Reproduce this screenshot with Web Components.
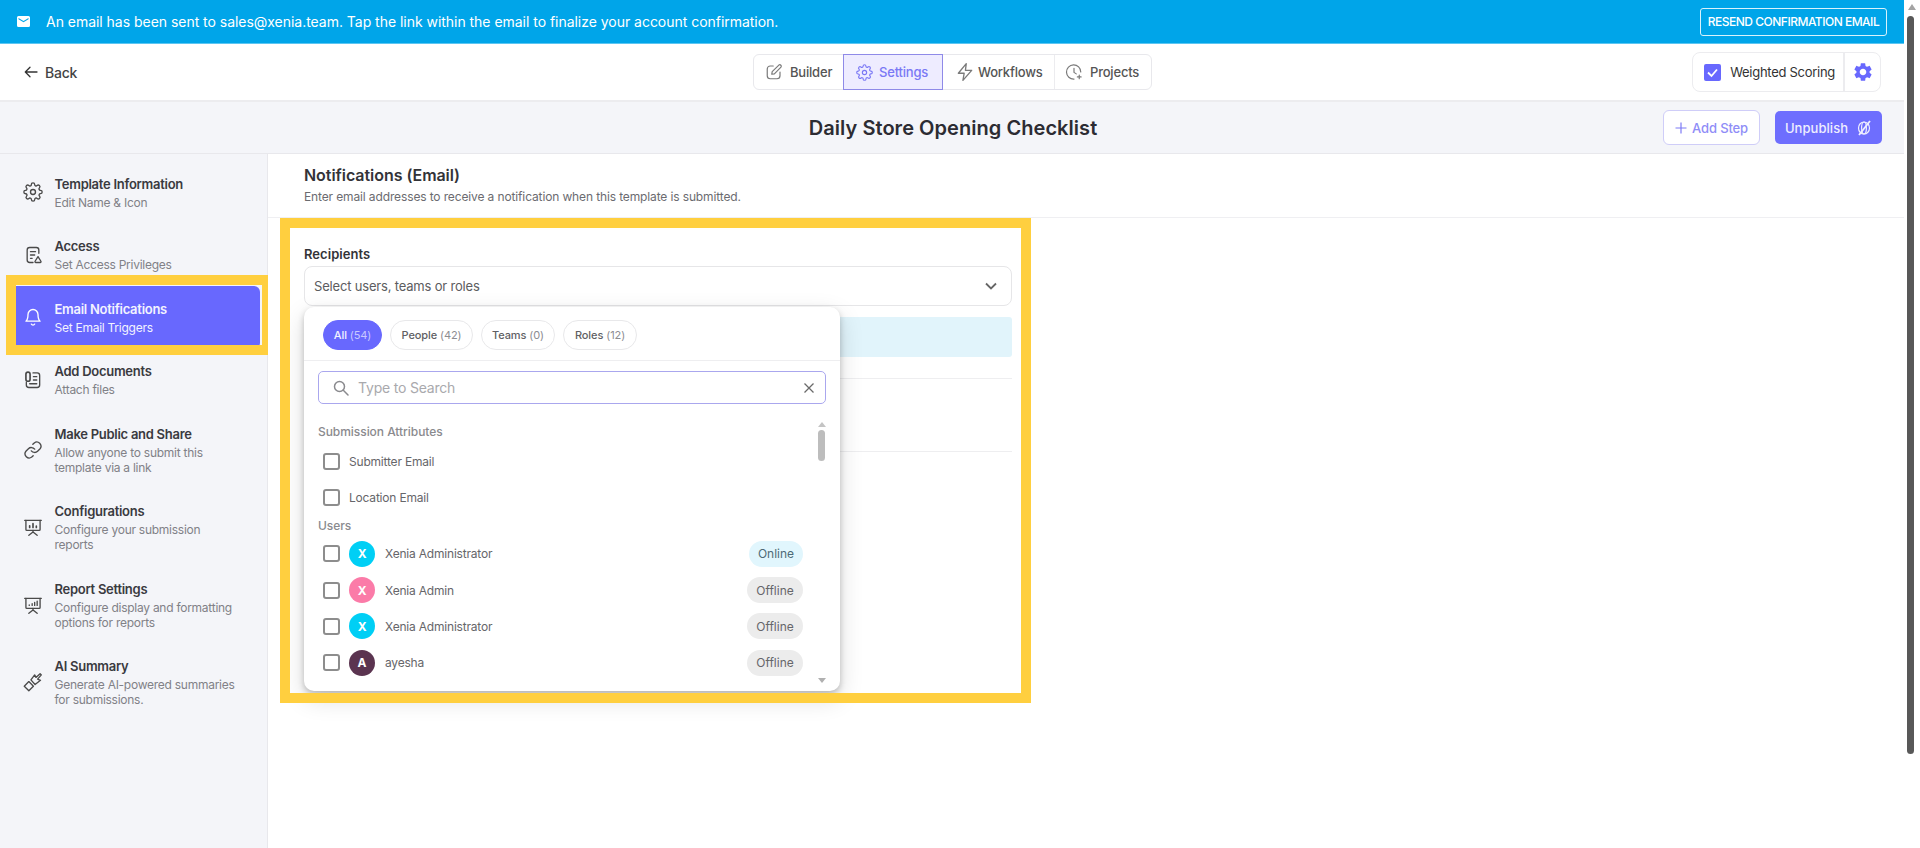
<!DOCTYPE html>
<html>
<head>
<meta charset="utf-8">
<title>Daily Store Opening Checklist</title>
<style>
  html, body { margin: 0; height: 100%; overflow: hidden; background: #fff; }
  body { font-family: "Inter", "Noto Sans", sans-serif; color: #333; }
</style>
</head>
<body>
<app-shell>
  <confirm-banner email="sales@xenia.team"></confirm-banner>
  <top-bar></top-bar>
  <title-bar>Daily Store Opening Checklist</title-bar>
  <div slot="body">
    <side-nav></side-nav>
  </div>
</app-shell>

<script>
const ICONS = {
  gear: '<circle cx="12" cy="12" r="3"/><path d="M19.4 15a1.65 1.65 0 0 0 .33 1.82l.06.06a2 2 0 0 1-2.83 2.83l-.06-.06a1.65 1.65 0 0 0-1.82-.33 1.65 1.65 0 0 0-1 1.51V21a2 2 0 0 1-4 0v-.09A1.65 1.65 0 0 0 9 19.4a1.65 1.65 0 0 0-1.82.33l-.06.06a2 2 0 0 1-2.83-2.83l.06-.06a1.65 1.65 0 0 0 .33-1.82 1.65 1.65 0 0 0-1.51-1H3a2 2 0 0 1 0-4h.09A1.65 1.65 0 0 0 4.6 9a1.65 1.65 0 0 0-.33-1.82l-.06-.06a2 2 0 0 1 2.83-2.83l.06.06a1.65 1.65 0 0 0 1.82.33H9a1.65 1.65 0 0 0 1-1.51V3a2 2 0 0 1 4 0v.09a1.65 1.65 0 0 0 1 1.51 1.65 1.65 0 0 0 1.82-.33l.06-.06a2 2 0 0 1 2.83 2.83l-.06.06a1.65 1.65 0 0 0-.33 1.82V9a1.65 1.65 0 0 0 1.51 1H21a2 2 0 0 1 0 4h-.09a1.65 1.65 0 0 0-1.51 1z"/>',
  edit: '<path d="M11 4H7a4 4 0 0 0-4 4v9a4 4 0 0 0 4 4h9a4 4 0 0 0 4-4v-5"/><path d="M18.5 2.8a2 2 0 0 1 2.8 2.8L12.5 14.4 9 15l.6-3.5z"/>',
  bolt: '<path d="M13.5 2 4 13.5h7L9.5 22 20 10h-7.5z"/>',
  clock: '<path d="M21 12a9.5 9.5 0 1 0-9 9.5"/><path d="M12 7v5.5l3 2"/><path d="M19 16v5M16.5 18.500h5"/>',
  doclock: '<path d="M19 10V6a3 3 0 0 0-3-3H8a3 3 0 0 0-3 3v12a3 3 0 0 0 3 3h4"/><path d="M9 8h6M9 12h5M9 16h2"/><path d="M18 14l3.500 5.500a1 1 0 0 1-.9 1.500h-5.200a1 1 0 0 1-.9-1.500z"/>',
  bell: '<path d="M18 9a6 6 0 0 0-12 0c0 6-2.500 8-2.500 8h17S18 15 18 9"/><path d="M10 20.500a2.200 2.200 0 0 0 4 0"/>',
  docs: '<path d="M12 3.500h5a3 3 0 0 1 3 3V18a3 3 0 0 1-3 3H7a3 3 0 0 1-3-3v-3"/><path d="M3.500 5v6a2.500 2.500 0 0 0 5 0V5a2.500 2.500 0 0 0-5 0" stroke-width="2"/><path d="M12.500 8h4M12.500 12h4M8 16.500h8.500"/>',
  link: '<path d="M10 13a5 5 0 0 0 7.500.5l3-3a5 5 0 0 0-7-7l-1.700 1.700"/><path d="M14 11a5 5 0 0 0-7.500-.5l-3 3a5 5 0 0 0 7 7l1.700-1.700"/>',
  board: '<path d="M2 4h20"/><path d="M3.500 4v11a1 1 0 0 0 1 1h15a1 1 0 0 0 1-1V4"/><path d="M12 16v2M12 18l-5 4M12 18l5 4"/><path d="M8 12.500v-2M12 12.500V8M16 12.500v-1.500" stroke-width="2"/>',
  boardline: '<path d="M2 4h20"/><path d="M3.500 4v11a1 1 0 0 0 1 1h15a1 1 0 0 0 1-1V4"/><path d="M12 16v2M12 18l-5 4M12 18l5 4"/><path d="M7.500 12.500v-.5M11 12.500V10.500M14 12.500V9M17 12.500V7.500"/>',
  spark: '<path d="M7 11.500 12.500 17 7 22.500 1.500 17z"/><path d="M9.500 9.500 14 3.500l1.500 3L20.500 2 22 3.500l-4.500 5 3.500 1.500L14.500 15z"/>'
};

function svgIcon(name, size, stroke) {
  return `<svg width="${size}" height="${size}" viewBox="0 0 24 24" fill="none" stroke="currentColor" stroke-width="${stroke || 1.6}" stroke-linecap="round" stroke-linejoin="round">${ICONS[name]}</svg>`;
}

class AppShell extends HTMLElement {
  constructor() {
    super();
    this.attachShadow({mode: 'open'}).innerHTML = `
      <style>
        :host { display: flex; width: 1920px; height: 848px; overflow: hidden; }
        .page { flex: 1; min-width: 0; display: flex; flex-direction: column; }
        .body { flex: 1; display: flex; min-height: 0; }
      </style>
      <div class="page">
        <slot></slot>
        <div class="body"><slot name="body"></slot><notify-panel></notify-panel></div>
      </div>
      <page-scrollbar></page-scrollbar>
    `;
  }
}
customElements.define('app-shell', AppShell);

class PageScrollbar extends HTMLElement {
  constructor() {
    super();
    this.attachShadow({mode: 'open'}).innerHTML = `
      <style>
        :host { display: block; width: 16px; background: #fff; }
        .up { width: 0; height: 0; margin: 4px auto 0; border: 4px solid transparent; border-top: 0; border-bottom: 6px solid #a3a3a3; }
        .thumb { width: 7px; height: 738px; margin: 6px 0 0 3px; background: #585858; border-radius: 4px; }
      </style>
      <div class="up"></div>
      <div class="thumb"></div>
    `;
  }
}
customElements.define('page-scrollbar', PageScrollbar);

class ConfirmBanner extends HTMLElement {
  constructor() {
    super();
    this.attachShadow({mode: 'open'}).innerHTML = `
      <style>
        :host { display: flex; align-items: center; height: 43px; padding: 0 17px; background: #00a5e9; border-bottom: 1px solid #5cc6f2; color: #fff; font-size: 14px; letter-spacing: -.03px; }
        svg { flex: none; margin-right: 16px; }
        span { flex: 1; }
        button { height: 28px; width: 187px; padding: 0; background: none; border: 1px solid #d9f2fc; border-radius: 3px; color: #fff; font: 500 12px "Inter", sans-serif; letter-spacing: -.5px; }
      </style>
      <svg width="13" height="11" viewBox="0 0 13 11"><path fill="#fff" d="M1.500 0h10A1.500 1.500 0 0 1 13 1.500v8a1.500 1.500 0 0 1-1.500 1.500h-10A1.500 1.500 0 0 1 0 9.500v-8A1.500 1.500 0 0 1 1.500 0zm0 2v1.300l5 3 5-3V2l-5 3z" fill-rule="evenodd"/></svg>
      <span></span>
      <button>RESEND CONFIRMATION EMAIL</button>
    `;
    this.shadowRoot.querySelector('span').textContent =
      `An email has been sent to ${this.getAttribute('email')}. Tap the link within the email to finalize your account confirmation.`;
  }
}
customElements.define('confirm-banner', ConfirmBanner);

class TopBar extends HTMLElement {
  constructor() {
    super();
    this.attachShadow({mode: 'open'}).innerHTML = `
      <style>
        :host { display: grid; grid-template-columns: 1fr auto 1fr; align-items: center; height: 56px; padding: 0 23px 0 24px; background: #fff; border-bottom: 2px solid #ececef; }
        .back { display: flex; align-items: center; gap: 7px; font-size: 14px; font-weight: 500; color: #444; letter-spacing: -.2px; }
        .tabs { display: flex; height: 36px; box-sizing: border-box; border: 1px solid #e8e8ec; border-radius: 6px; }
        .tab { display: flex; align-items: center; box-sizing: border-box; font-size: 13px; font-weight: 500; color: #555; letter-spacing: -.2px; }
        .tab svg { color: #7a7a7a; flex: none; }
        .tab.on { margin: -1px 0; background: #eeecff; border: 1px solid #8f8ae8; color: #7a78f5; }
        .tab.on svg { color: #7a78f5; }
        .tab.rule { border-left: 1px solid #ececef; }
        .weight { justify-self: end; display: flex; height: 40px; box-sizing: border-box; border: 1px solid #ececef; border-radius: 8px; align-items: center; }
        .check { display: flex; align-items: center; gap: 9px; height: 100%; padding: 0 8px 0 11px; border-right: 2px solid #ececef; font-size: 13px; color: #333; letter-spacing: -.28px; }
        .box { width: 17px; height: 17px; background: #6868fe; border-radius: 2px; display: flex; }
        .cog { width: 35px; display: flex; justify-content: center; color: #6868fe; }
      </style>
      <div class="back">
        <svg width="14" height="14" viewBox="0 0 14 14" fill="none" stroke="#333" stroke-width="1.300" stroke-linecap="round" stroke-linejoin="round"><path d="M13 7H1.500M6 2.200 1.300 7 6 11.800"/></svg>
        Back
      </div>
      <div class="tabs">
        <div class="tab" style="width:89px;padding-left:11px;gap:7px">${svgIcon('edit', 18)}Builder</div>
        <div class="tab on" style="width:100px;padding-left:12px;gap:6px">${svgIcon('gear', 17)}Settings</div>
        <div class="tab" style="width:111px;padding-left:12px;gap:3px">${svgIcon('bolt', 20)}Workflows</div>
        <div class="tab rule" style="width:97px;padding-left:10px;gap:7px">${svgIcon('clock', 18)}Projects</div>
      </div>
      <div class="weight">
        <div class="check">
          <span class="box"><svg width="17" height="17" viewBox="0 0 17 17" fill="none" stroke="#fff" stroke-width="1.800"><path d="M4 8.500 7.500 12 13 5.500"/></svg></span>
          Weighted Scoring
        </div>
        <div class="cog"><svg width="22" height="22" viewBox="0 0 24 24" fill="currentColor"><path d="M19.14 12.94c.04-.3.06-.61.06-.94 0-.32-.02-.64-.07-.94l2.03-1.58c.18-.14.23-.41.12-.61l-1.920-3.320c-.12-.22-.37-.29-.59-.22l-2.390.96c-.5-.38-1.030-.7-1.620-.94l-.36-2.540c-.04-.24-.24-.41-.48-.41h-3.840c-.24 0-.43.17-.47.41l-.36 2.540c-.59.24-1.130.57-1.620.94l-2.390-.96c-.22-.08-.47 0-.59.22L2.740 8.870c-.12.21-.08.47.12.61l2.030 1.580c-.05.3-.09.63-.09.94s.02.64.07.94l-2.030 1.580c-.18.14-.23.41-.12.61l1.920 3.320c.12.22.37.29.59.22l2.390-.96c.5.38 1.030.7 1.620.94l.36 2.540c.05.24.24.41.48.41h3.840c.24 0 .44-.17.47-.41l.36-2.540c.59-.24 1.130-.56 1.620-.94l2.390.96c.22.08.47 0 .59-.22l1.920-3.320c.12-.22.07-.47-.12-.61l-2.010-1.580zM12 15.600c-1.980 0-3.600-1.620-3.600-3.600s1.620-3.600 3.600-3.600 3.600 1.620 3.600 3.600-1.620 3.600-3.600 3.600z"/></svg></div>
      </div>
    `;
  }
}
customElements.define('top-bar', TopBar);

class TitleBar extends HTMLElement {
  constructor() {
    super();
    this.attachShadow({mode: 'open'}).innerHTML = `
      <style>
        :host { display: grid; grid-template-columns: 1fr auto 1fr; align-items: center; height: 51px; padding: 0 22px 0 24px; background: #f4f5f9; border-bottom: 1px solid #e8e8ec; }
        h1 { margin: 0; font-size: 20px; font-weight: 600; color: #2c2c33; letter-spacing: .05px; grid-column: 2; }
        .acts { display: flex; gap: 15px; justify-self: end; align-items: center; }
        .add { display: flex; align-items: center; justify-content: center; gap: 5px; width: 97px; height: 35px; box-sizing: border-box; background: #fff; border: 1px solid #cfcdf8; border-radius: 6px; color: #8f8df7; font-size: 13px; font-weight: 500; letter-spacing: -.15px; }
        .pub { display: flex; align-items: center; justify-content: center; gap: 8px; width: 107px; height: 33px; background: #6e6efe; border-radius: 5px; color: #eeeeff; font-size: 13px; font-weight: 500; letter-spacing: .05px; }
      </style>
      <h1><slot></slot></h1>
      <div class="acts">
        <div class="add"><svg width="12" height="12" viewBox="0 0 12 12" stroke="#7d7bf5" stroke-width="1.200"><path d="M6 .5v11M.5 6h11"/></svg>Add Step</div>
        <div class="pub">Unpublish
          <svg width="16" height="16" viewBox="0 0 16 16" fill="none" stroke="#eeeeff" stroke-width="1.200"><ellipse cx="8" cy="8" rx="5.500" ry="6"/><ellipse cx="8" cy="8" rx="2.400" ry="6"/><path d="M14 1 3 15" stroke-width="1.800"/></svg>
        </div>
      </div>
    `;
  }
}
customElements.define('title-bar', TitleBar);

class NavItem extends HTMLElement {
  constructor() {
    super();
    const size = this.getAttribute('size') || 20;
    this.attachShadow({mode: 'open'}).innerHTML = `
      <style>
        :host { display: grid; grid-template-columns: 20px 1fr; column-gap: 11.500px; align-items: center; margin-left: 8px; margin-right: 7px; padding: 13.750px 15px; border-radius: 0 6px 6px 0; }
        :host([active]) { background: #6868fe; color: #fff; }
        .icon { display: flex; justify-content: center; color: #4a4a4a; }
        :host([active]) .icon { color: #fff; }
        .t { font-size: 13px; font-weight: 600; line-height: 18px; color: #3a3a40; letter-spacing: -.27px; }
        .s { font-size: 12px; line-height: 15px; margin-top: 2px; color: #818187; letter-spacing: -.26px; }
        :host([active]) .t, :host([active]) .s { color: #f3f3ff; }
      </style>
      <div class="icon">${svgIcon(this.getAttribute('icon'), size, 1.6)}</div>
      <div>
        <div class="t">${this.getAttribute('label')}</div>
        <div class="s"><slot></slot></div>
      </div>
    `;
  }
}
customElements.define('nav-item', NavItem);

class SideNav extends HTMLElement {
  constructor() {
    super();
    this.attachShadow({mode: 'open'}).innerHTML = `
      <style>
        :host { display: block; width: 268px; height: 100%; box-sizing: border-box; padding-top: 7px; background: #f4f5f9; border-right: 1px solid #e8e8ec; position: relative; }
        .mark { position: absolute; left: 6px; top: 121px; width: 246px; height: 60px; border: 10px solid #ffcf3f; pointer-events: none; }
      </style>
      <nav-item icon="gear" label="Template Information">Edit Name &amp; Icon</nav-item>
      <nav-item icon="doclock" label="Access">Set Access Privileges</nav-item>
      <nav-item icon="bell" label="Email Notifications" active>Set Email Triggers</nav-item>
      <nav-item icon="docs" label="Add Documents">Attach files</nav-item>
      <nav-item icon="link" label="Make Public and Share">Allow anyone to submit this<br>template via a link</nav-item>
      <nav-item icon="board" label="Configurations">Configure your submission<br>reports</nav-item>
      <nav-item icon="boardline" label="Report Settings">Configure display and formatting<br>options for reports</nav-item>
      <nav-item icon="spark" size="24" label="AI Summary">Generate AI-powered summaries<br>for submissions.</nav-item>
      <div class="mark"></div>
    `;
  }
}
customElements.define('side-nav', SideNav);

class NotifyPanel extends HTMLElement {
  constructor() {
    super();
    this.attachShadow({mode: 'open'}).innerHTML = `
      <style>
        :host { display: block; flex: 1; min-width: 0; position: relative; background: #fff; }
        header { height: 64px; box-sizing: border-box; padding: 11px 36px 0; border-bottom: 1px solid #efeff2; }
        h2 { margin: 0; font-size: 16px; line-height: 20px; font-weight: 600; color: #333338; letter-spacing: -.05px; }
        header p { margin: 4px 0 0; font-size: 12px; line-height: 16px; color: #6b6b70; letter-spacing: -.13px; }
        .form { width: 708px; margin-left: 36px; }
        label { display: block; margin-top: 27px; font-size: 13px; line-height: 18px; font-weight: 600; color: #333338; letter-spacing: .05px; }
        .select { display: flex; align-items: center; justify-content: space-between; height: 40px; box-sizing: border-box; margin-top: 3px; padding: 0 14px 0 9px; border: 1px solid #e6e6e8; border-radius: 8px; font-size: 13px; color: #5c5c60; letter-spacing: -.18px; }
        .info { height: 40px; margin-top: 11px; background: #e1f4fb; border-radius: 3px; }
        .rule { height: 1px; background: #eeeef0; }
        .rule.a { margin-top: 21px; }
        .rule.b { margin-top: 72px; }
        recipient-popup { position: absolute; left: 36px; top: 153px; z-index: 1; }
        .mark { position: absolute; left: 12px; top: 64px; width: 731px; height: 465px; border: 10px solid #ffcf3f; pointer-events: none; z-index: 2; }
      </style>
      <header>
        <h2>Notifications (Email)</h2>
        <p>Enter email addresses to receive a notification when this template is submitted.</p>
      </header>
      <div class="form">
        <label>Recipients</label>
        <div class="select">Select users, teams or roles
          <svg width="12" height="8" viewBox="0 0 12 8" fill="none" stroke="#666" stroke-width="1.800"><path d="M1 1.500 6 6.500 11 1.500"/></svg>
        </div>
        <div class="info"></div>
        <div class="rule a"></div>
        <div class="rule b"></div>
      </div>
      <recipient-popup></recipient-popup>
      <div class="mark"></div>
    `;
  }
}
customElements.define('notify-panel', NotifyPanel);

class UserRow extends HTMLElement {
  constructor() {
    super();
    const bg = this.getAttribute('color');
    const status = this.getAttribute('status');
    this.attachShadow({mode: 'open'}).innerHTML = `
      <style>
        :host { display: flex; align-items: center; height: 36.300px; font-size: 12px; color: #66666a; letter-spacing: -.2px; }
        .cb { width: 17px; height: 17px; box-sizing: border-box; border: 2px solid #8d8d8d; border-radius: 3px; margin-right: 9px; flex: none; }
        .av { width: 26px; height: 26px; border-radius: 50%; margin-right: 10px; color: #fff; font-size: 12px; font-weight: 700; display: flex; align-items: center; justify-content: center; flex: none; }
        .name { flex: 1; }
        .chip { height: 26px; border-radius: 13px; display: flex; align-items: center; justify-content: center; font-size: 12px; letter-spacing: 0; }
        .online { width: 54px; background: #e1f6fd; color: #4e6a76; }
        .offline { width: 56px; background: #ececec; color: #66666a; }
      </style>
      <div class="cb"></div>
      ${bg ? `<div class="av" style="background:${bg}">${this.getAttribute('initial')}</div>` : ''}
      <div class="name"><slot></slot></div>
      ${status ? `<div class="chip ${status.toLowerCase()}">${status}</div>` : ''}
    `;
  }
}
customElements.define('user-row', UserRow);

class RecipientPopup extends HTMLElement {
  constructor() {
    super();
    this.attachShadow({mode: 'open'}).innerHTML = `
      <style>
        :host { display: block; width: 536px; height: 384px; box-sizing: border-box; background: #fff; border-radius: 10px; box-shadow: 0 3px 6px rgba(0,0,0,.22), 0 8px 24px rgba(0,0,0,.14); overflow: hidden; position: relative; }
        .tabs { display: flex; gap: 8px; height: 54px; box-sizing: border-box; padding: 13px 0 0 19px; border-bottom: 1px solid #eeeef0; }
        .p { height: 30px; box-sizing: border-box; border: 1px solid #e8e8ea; border-radius: 15px; display: flex; align-items: center; justify-content: center; font-size: 11px; font-weight: 500; color: #5f5f64; letter-spacing: -.1px; }
        .p span { color: #8d8d92; font-weight: 400; margin-left: 3px; }
        .p.on { background: #6868fe; border-color: #6868fe; color: #f3f3ff; }
        .p.on span { color: #c9c8ff; }
        .search { margin: 10px 14px 0; height: 33px; box-sizing: border-box; border: 1.500px solid #aaa7ee; border-radius: 5px; display: flex; align-items: center; padding: 0 11px 0 14px; gap: 9px; font-size: 14px; color: #a9a9ad; letter-spacing: -.2px; }
        .search span { flex: 1; }
        .list { padding: 19px 37px 0 14px; }
        .h { font-size: 12px; line-height: 18px; font-weight: 500; color: #8a8a8e; letter-spacing: -.05px; }
        .h.users { line-height: 20px; }
        user-row { margin-left: 5px; }
        .first { margin-top: 2px; }
        .bar { position: absolute; right: 14px; top: 115px; bottom: 8px; width: 8px; }
        .up, .dn { position: absolute; left: 0; width: 0; height: 0; border: 4px solid transparent; }
        .up { top: 0; border-top: 0; border-bottom: 5px solid #c4c4c4; }
        .dn { bottom: 0; border-bottom: 0; border-top: 5px solid #b0b0b0; }
        .th { position: absolute; left: 0; top: 8px; width: 7px; height: 31px; background: #bdbdbd; border-radius: 4px; }
      </style>
      <div class="tabs">
        <div class="p on" style="width:59px">All<span>(54)</span></div>
        <div class="p" style="width:83px">People<span>(42)</span></div>
        <div class="p" style="width:74px">Teams<span>(0)</span></div>
        <div class="p" style="width:74px">Roles<span>(12)</span></div>
      </div>
      <div class="search">
        <svg width="16" height="16" viewBox="0 0 16 16" fill="none" stroke="#8a8a8e" stroke-width="1.500" stroke-linecap="round"><circle cx="6.500" cy="6.500" r="5"/><path d="M10.300 10.300 15 15"/></svg>
        <span>Type to Search</span>
        <svg width="10" height="10" viewBox="0 0 10 10" stroke="#6a6a6a" stroke-width="1.300"><path d="M.5.5l9 9M9.500.5l-9 9"/></svg>
      </div>
      <div class="list">
        <div class="h">Submission Attributes</div>
        <user-row class="first">Submitter Email</user-row>
        <user-row>Location Email</user-row>
        <div class="h users">Users</div>
        <user-row color="#00cff5" initial="X" status="Online">Xenia Administrator</user-row>
        <user-row color="#fb7ba8" initial="X" status="Offline">Xenia Admin</user-row>
        <user-row color="#00cff5" initial="X" status="Offline">Xenia Administrator</user-row>
        <user-row color="#5b3450" initial="A" status="Offline">ayesha</user-row>
      </div>
      <div class="bar"><div class="up"></div><div class="th"></div><div class="dn"></div></div>
    `;
  }
}
customElements.define('recipient-popup', RecipientPopup);
</script>
</body>
</html>
